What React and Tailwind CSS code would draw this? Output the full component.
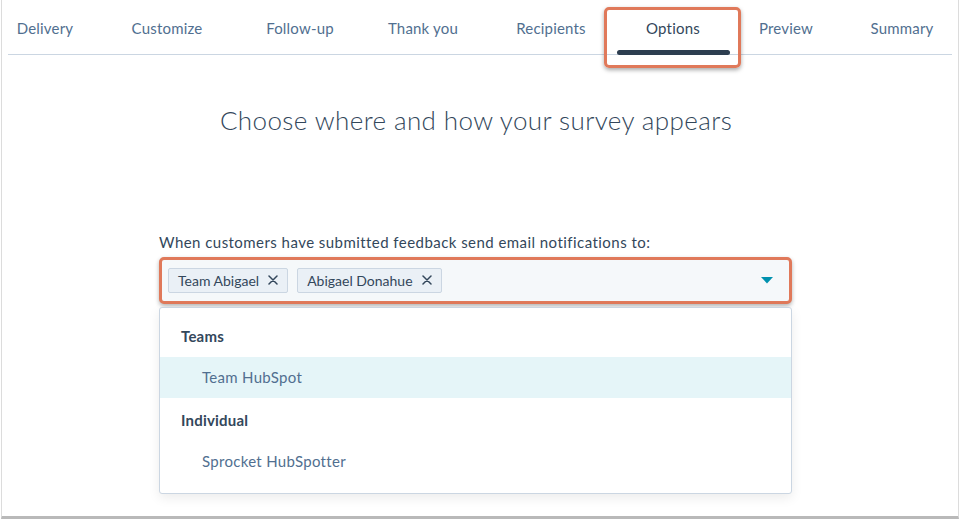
import React from 'react';

const tabs = [
  { label: 'Delivery', w: 'w-[74px]' },
  { label: 'Customize', w: 'w-[170px]' },
  { label: 'Follow-up', w: 'w-[96px]' },
  { label: 'Thank you', w: 'w-[150px]' },
  { label: 'Recipients', w: 'w-[106px]' },
  { label: 'Options', w: 'w-[138px]', active: true },
  { label: 'Preview', w: 'w-[88px]' },
  { label: 'Summary', w: 'w-[144px]' },
];

function Tag({ children }) {
  return (
    <span className="flex items-center gap-[9px] h-[25px] pl-[9px] pr-[9px] bg-[#eaf0f6] border border-[#cbd6e2] rounded-[2px] text-[14px] text-[#33475b]">
      {children}
      <svg width="10" height="10" viewBox="0 0 10 10" className="text-[#33475b]">
        <path d="M1 1 L9 9 M9 1 L1 9" stroke="currentColor" strokeWidth="1.5" strokeLinecap="round" />
      </svg>
    </span>
  );
}

export default function App() {
  return (
    <div className="w-[960px] h-[521px] bg-white overflow-hidden font-['Lato','Open_Sans',sans-serif]">
      <div className="ml-[1px] w-[958px] h-[519px] bg-white border-l border-r border-[#dcdcdc] border-b-[3px] border-b-[#b9b9b9]">
        {/* tabs */}
        <div className="mx-[6px] h-[55px] flex border-b border-[#cbd6e2]">
          {tabs.map(t => (
            <div key={t.label} className={`${t.w} shrink-0 relative flex items-start justify-center pt-[17px]`}>
              <span className={`text-[15px] tracking-[0.2px] ${t.active ? 'text-[#33475b]' : 'text-[#516f90]'}`}>{t.label}</span>
              {t.active && (
                <>
                  <div className="absolute left-[13px] right-[12px] bottom-[-1px] h-[5px] rounded-full bg-[#2d3e50]" />
                  <div className="absolute left-0 right-[1px] top-[7px] h-[61px] rounded-[5px] border-[3px] border-[#e0795a] shadow-[0_2px_4px_rgba(0,0,0,0.35)]" />
                </>
              )}
            </div>
          ))}
        </div>

        <h1 className="mt-[46px] pr-[8px] text-center text-[26px] font-light tracking-[0.4px] text-[#33475b]">
          Choose where and how your survey appears
        </h1>

        <div className="ml-[157px] w-[633px] mt-[91px]">
          <p className="text-[15px] tracking-[0.45px] text-[#33475b] mb-[3px]">
            When customers have submitted feedback send email notifications to:
          </p>
          <div className="h-[47px] rounded-[5px] border-[3px] border-[#e0795a] bg-[#f5f8fa] shadow-[0_2px_4px_rgba(0,0,0,0.3)] flex items-center pl-[6px] pr-[16px] gap-[9px]">
            <Tag>Team Abigael</Tag>
            <Tag>Abigael Donahue</Tag>
            <div className="flex-1" />
            <svg width="12" height="7" viewBox="0 0 12 7">
              <path d="M0 0 H12 L6 6.5 Z" fill="#0091ae" />
            </svg>
          </div>
          <div className="mt-[3px] h-[187px] bg-white border border-[#cbd6e2] rounded-[3px] shadow-[0_4px_12px_rgba(0,0,0,0.08)] pt-[17px]">
            <div className="px-[21px] h-[32px] text-[15px] font-bold tracking-[0.2px] text-[#33475b]">Teams</div>
            <div className="h-[41px] bg-[#e5f5f8] flex items-center pl-[42px] text-[15px] tracking-[0.3px] text-[#516f90]">Team HubSpot</div>
            <div className="px-[21px] h-[46px] flex items-center text-[15px] font-bold tracking-[0.2px] text-[#33475b]">Individual</div>
            <div className="h-[36px] flex items-center pl-[42px] text-[15px] tracking-[0.3px] text-[#516f90]">Sprocket HubSpotter</div>
          </div>
        </div>
      </div>
    </div>
  );
}
